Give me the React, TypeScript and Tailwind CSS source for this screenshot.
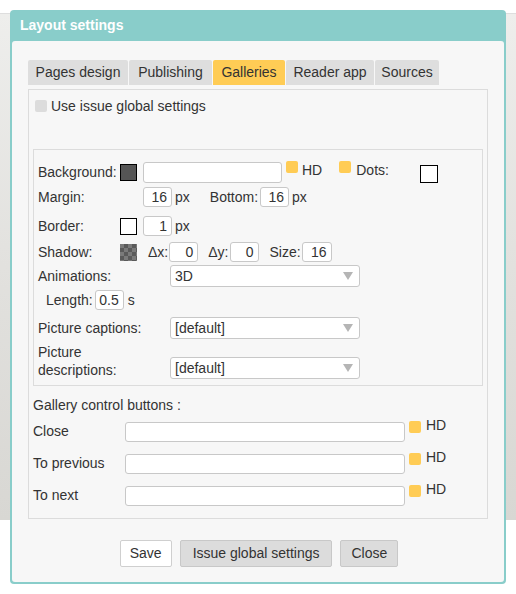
import React from "react";

const font = { fontFamily: '"Liberation Sans", Arial, sans-serif' };

function NumBox({ value, w = 29 }: { value: string; w?: number }) {
  return (
    <div
      className="h-[20px] bg-white border border-[#c8c8c8] rounded-[3px] flex items-center justify-end pr-[4px] text-[14px] text-[#333]"
      style={{ width: w }}
    >
      {value}
    </div>
  );
}

function Swatch({ kind }: { kind: "dark" | "white" | "checker" }) {
  if (kind === "checker") {
    return (
      <div className="w-[17px] h-[17px] bg-[conic-gradient(#5a5a5a_25%,#7a7a7a_0_50%,#5a5a5a_0_75%,#7a7a7a_0)] bg-[length:8px_8px]" />
    );
  }
  return (
    <div
      className={
        "w-[17px] h-[17px] border border-black " +
        (kind === "dark" ? "bg-[#555555]" : "bg-white")
      }
    />
  );
}

function Flag() {
  return <div className="w-[12px] h-[12px] rounded-[2px] bg-[#ffcc55]" />;
}

function SelectBox({ value }: { value: string }) {
  return (
    <div className="w-[190px] h-[22px] bg-white border border-[#c8c8c8] rounded-[3px] flex items-center justify-between pl-[4px] pr-[6px] text-[14px] text-[#333]">
      <span>{value}</span>
      <svg width="10" height="8" viewBox="0 0 10 8">
        <path d="M0 0 L10 0 L5 8 Z" fill="#b5b5b5" />
      </svg>
    </div>
  );
}

function ButtonRow({ label }: { label: string }) {
  return (
    <div className="flex items-start h-[32px]">
      <div className="w-[92px] h-[19px] flex items-center">{label}</div>
      <div className="w-[280px] h-[20px] bg-white border border-[#c8c8c8] rounded-[3px]" />
      <div className="ml-[4px] mt-[-1px] flex items-center gap-[5px] h-[12px]">
        <Flag />
      </div>
      <div className="ml-[5px] mt-[-6px] leading-[18px]">HD</div>
    </div>
  );
}

export default function App() {
  const tabs = [
    { name: "Pages design", w: 100 },
    { name: "Publishing", w: 83 },
    { name: "Galleries", w: 72, active: true },
    { name: "Reader app", w: 88 },
    { name: "Sources", w: 64 },
  ];

  return (
    <div className="relative w-[516px] h-[594px] bg-white overflow-hidden text-[#333] text-[14px]" style={font}>
      {/* page behind the modal */}
      <div className="mt-[13px] h-px bg-[#dedede]" />
      <div className="h-[506px] bg-gradient-to-b from-[#eeeeec] via-[#e2e1de] to-[#d8d7d3]" />

      {/* modal */}
      <div className="absolute left-[10px] top-[10px] w-[496px] h-[574px] rounded-[4px] bg-[#89cdca] px-[2px] pb-[2px] flex flex-col">
        <div className="h-[31px] flex items-center pl-[8px] text-white font-bold text-[14px]">
          Layout settings
        </div>
        <div className="flex-1 bg-[#f7f7f7] rounded-[3px] px-[16px] pt-[19px] flex flex-col">
          {/* tabs */}
          <div className="flex gap-[1px] h-[25px]">
            {tabs.map((t) => (
              <div
                key={t.name}
                className={
                  "h-[25px] rounded-t-[2px] flex items-center justify-center " +
                  (t.active ? "bg-[#ffcc55]" : "bg-[#dedede]")
                }
                style={{ width: t.w }}
              >
                {t.name}
              </div>
            ))}
          </div>

          {/* tab page */}
          <div className="mt-[4px] h-[430px] border border-[#dcdcdc] px-[4px] pt-[9px] flex flex-col">
            <div className="flex items-center h-[14px] pl-[2px]">
              <div className="w-[12px] h-[12px] rounded-[2px] bg-[#dcdcdc]" />
              <span className="ml-[4px]">Use issue global settings</span>
            </div>

            {/* appearance group */}
            <div className="mt-[36px] h-[238px] border border-[#dcdcdc] pl-[4px] pt-[12px]">
              {/* background */}
              <div className="flex items-center h-[21px]">
                <div className="w-[82px]">Background:</div>
                <Swatch kind="dark" />
                <div className="ml-[6px] w-[139px] h-[21px] bg-white border border-[#c8c8c8] rounded-[3px]" />
                <div className="ml-[4px] self-start mt-[-1px]">
                  <Flag />
                </div>
                <div className="ml-[4px] mt-[-5px]">HD</div>
                <div className="ml-[17px] self-start mt-[-1px]">
                  <Flag />
                </div>
                <div className="ml-[5px] mt-[-5px]">Dots:</div>
                <div className="ml-[31px] mt-[3px] w-[18px] h-[18px] border border-black bg-white" />
              </div>

              {/* margin */}
              <div className="flex items-center h-[20px] mt-[4px]">
                <div className="w-[105px]">Margin:</div>
                <NumBox value="16" />
                <span className="ml-[3px]">px</span>
                <span className="ml-[20px]">Bottom:</span>
                <div className="ml-[2px]">
                  <NumBox value="16" />
                </div>
                <span className="ml-[3px]">px</span>
              </div>

              {/* border */}
              <div className="flex items-center h-[20px] mt-[9px]">
                <div className="w-[82px]">Border:</div>
                <Swatch kind="white" />
                <div className="ml-[6px]">
                  <NumBox value="1" />
                </div>
                <span className="ml-[3px]">px</span>
              </div>

              {/* shadow */}
              <div className="flex items-center h-[20px] mt-[6px]">
                <div className="w-[82px]">Shadow:</div>
                <Swatch kind="checker" />
                <span className="ml-[11px]">Δx:</span>
                <div className="ml-[1px]">
                  <NumBox value="0" />
                </div>
                <span className="ml-[10px]">Δy:</span>
                <div className="ml-[1px]">
                  <NumBox value="0" />
                </div>
                <span className="ml-[11px]">Size:</span>
                <div className="ml-[1px]">
                  <NumBox value="16" w={30} />
                </div>
              </div>

              {/* animations */}
              <div className="flex items-center h-[22px] mt-[3px]">
                <div className="w-[132px]">Animations:</div>
                <SelectBox value="3D" />
              </div>

              {/* length */}
              <div className="flex items-center h-[20px] mt-[3px] pl-[8px]">
                <span>Length:</span>
                <div className="ml-[2px]">
                  <NumBox value="0.5" w={29} />
                </div>
                <span className="ml-[4px]">s</span>
              </div>

              {/* captions */}
              <div className="flex items-center h-[22px] mt-[7px]">
                <div className="w-[132px]">Picture captions:</div>
                <SelectBox value="[default]" />
              </div>

              {/* descriptions */}
              <div className="flex items-end h-[38px] mt-[2px]">
                <div className="w-[132px] leading-[18px]">
                  Picture
                  <br />
                  descriptions:
                </div>
                <SelectBox value="[default]" />
              </div>
            </div>

            {/* gallery control buttons */}
            <div className="mt-[10px] h-[18px] flex items-center">Gallery control buttons :</div>
            <div className="mt-[8px] flex flex-col">
              <ButtonRow label="Close" />
              <ButtonRow label="To previous" />
              <ButtonRow label="To next" />
            </div>
          </div>

          {/* footer buttons */}
          <div className="mt-[21px] flex justify-center gap-[8px] pl-[2px]">
            <div className="h-[27px] px-[9px] flex items-center bg-white border border-[#cfcfcf] rounded-[2px]">
              Save
            </div>
            <div className="h-[27px] px-[12px] flex items-center bg-[#dcdcdc] border border-[#c8c8c8] rounded-[2px]">
              Issue global settings
            </div>
            <div className="h-[27px] px-[10px] flex items-center bg-[#dcdcdc] border border-[#c8c8c8] rounded-[2px]">
              Close
            </div>
          </div>
        </div>
      </div>
    </div>
  );
}
